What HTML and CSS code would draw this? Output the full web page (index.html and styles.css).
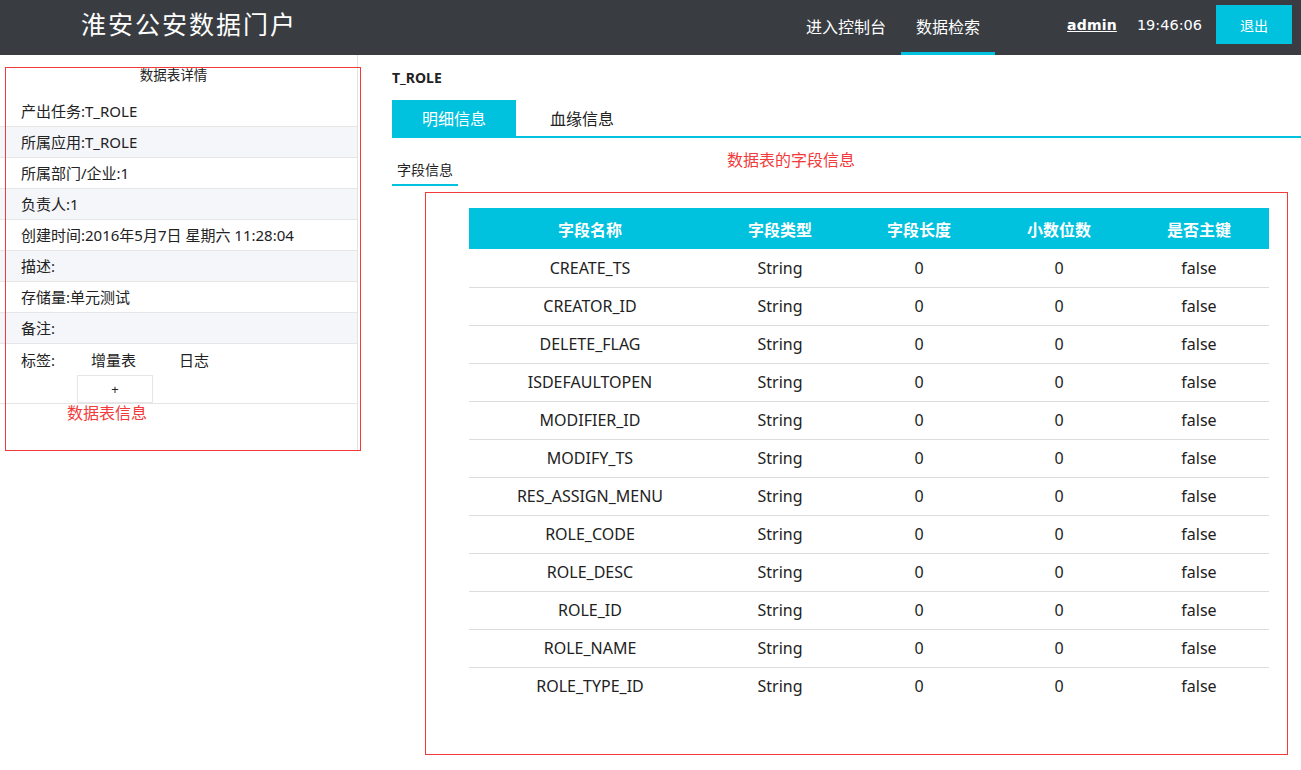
FILE: index.html
```html
<!DOCTYPE html>
<html lang="zh-CN">
<head>
<meta charset="utf-8">
<title>淮安公安数据门户</title>
<link rel="stylesheet" href="styles.css">
</head>
<body>
<header class="topbar">
  <div class="brand">淮安公安数据门户</div>
  <nav class="nav">
    <a class="nav-item">进入控制台</a>
    <a class="nav-item active">数据检索</a>
  </nav>
  <div class="user">
    <a class="username">admin</a>
    <span class="clock">19:46:06</span>
    <button class="logout">退出</button>
  </div>
</header>
<div class="page">
  <aside class="sidebar">
    <div class="side-title">数据表详情</div>
    <div class="row">产出任务:T_ROLE</div>
    <div class="row alt">所属应用:T_ROLE</div>
    <div class="row">所属部门/企业:1</div>
    <div class="row alt">负责人:1</div>
    <div class="row">创建时间:2016年5月7日 星期六 11:28:04</div>
    <div class="row alt">描述:</div>
    <div class="row">存储量:单元测试</div>
    <div class="row alt">备注:</div>
    <div class="row tags">
      <div class="tag-line">
        <span class="tag-label">标签:</span>
        <span class="tag">增量表</span>
        <span class="tag">日志</span>
      </div>
      <div class="add-btn">+</div>
    </div>
    <div class="note note-left">数据表信息</div>
    <div class="anno anno-left"></div>
  </aside>
  <main class="main">
    <div class="table-name">T_ROLE</div>
    <div class="tabs">
      <div class="tab active">明细信息</div>
      <div class="tab">血缘信息</div>
    </div>
    <div class="subtabs">
      <div class="subtab">字段信息</div>
      <div class="note note-right">数据表的字段信息</div>
    </div>
    <div class="field-box">
      <table class="fields">
        <thead>
          <tr><th class="c1">字段名称</th><th class="c2">字段类型</th><th class="c3">字段长度</th><th class="c3">小数位数</th><th class="c3">是否主键</th></tr>
        </thead>
        <tbody>
          <tr><td>CREATE_TS</td><td>String</td><td>0</td><td>0</td><td>false</td></tr>
          <tr><td>CREATOR_ID</td><td>String</td><td>0</td><td>0</td><td>false</td></tr>
          <tr><td>DELETE_FLAG</td><td>String</td><td>0</td><td>0</td><td>false</td></tr>
          <tr><td>ISDEFAULTOPEN</td><td>String</td><td>0</td><td>0</td><td>false</td></tr>
          <tr><td>MODIFIER_ID</td><td>String</td><td>0</td><td>0</td><td>false</td></tr>
          <tr><td>MODIFY_TS</td><td>String</td><td>0</td><td>0</td><td>false</td></tr>
          <tr><td>RES_ASSIGN_MENU</td><td>String</td><td>0</td><td>0</td><td>false</td></tr>
          <tr><td>ROLE_CODE</td><td>String</td><td>0</td><td>0</td><td>false</td></tr>
          <tr><td>ROLE_DESC</td><td>String</td><td>0</td><td>0</td><td>false</td></tr>
          <tr><td>ROLE_ID</td><td>String</td><td>0</td><td>0</td><td>false</td></tr>
          <tr><td>ROLE_NAME</td><td>String</td><td>0</td><td>0</td><td>false</td></tr>
          <tr><td>ROLE_TYPE_ID</td><td>String</td><td>0</td><td>0</td><td>false</td></tr>
        </tbody>
      </table>
    </div>
  </main>
</div>
</body>
</html>
```

FILE: styles.css
```css
* { box-sizing: border-box; }
html, body { margin: 0; padding: 0; }
body {
  font-family: "Noto Sans", "Noto Sans CJK SC", sans-serif;
  color: #222;
  background: #fff;
  width: 1301px;
  height: 770px;
  overflow: hidden;
}
.topbar {
  height: 55px;
  background: #393d42;
  display: flex;
  align-items: center;
  padding-left: 81px;
  padding-right: 9px;
  color: #fff;
}
.brand {
  font-size: 25px;
  letter-spacing: 2px;
  font-family: "Noto Sans CJK SC", sans-serif;
  line-height: 55px;
  margin-top: -8px;
}
.nav {
  display: flex;
  margin-left: auto;
  height: 55px;
}
.nav-item {
  font-size: 16px;
  font-family: "Noto Sans CJK SC", sans-serif;
  padding: 0 15px;
  line-height: 52px;
  border-bottom: 3px solid transparent;
  color: #fff;
}
.nav-item.active { border-bottom-color: #00c1de; }
.user {
  display: flex;
  align-items: center;
  margin-left: 72px;
  margin-top: -6px;
}
.username {
  font-weight: bold;
  font-size: 14px;
  text-decoration: underline;
  color: #fff;
  font-family: "DejaVu Sans", sans-serif;
  letter-spacing: 0.2px;
}
.clock {
  font-size: 14.5px;
  margin-left: 20px;
  font-family: "DejaVu Sans", sans-serif;
}
.logout {
  margin-left: 14px;
  width: 76px;
  height: 39px;
  border: 0;
  background: #00c1de;
  color: #fff;
  font-size: 14px;
  font-family: "Noto Sans CJK SC", sans-serif;
}
.page {
  display: flex;
  align-items: flex-start;
  height: 715px;
}
.sidebar {
  width: 358px;
  height: 396px;
  border-right: 1px solid #e3e3e3;
  position: relative;
  font-size: 15px;
  flex: none;
}
.side-title {
  text-align: center;
  height: 41px;
  line-height: 20px;
  padding-top: 10px;
  padding-right: 10px;
  font-size: 13.5px;
}
.row {
  height: 31px;
  line-height: 30px;
  padding-left: 21px;
  border-bottom: 1px solid #e6e6e6;
  font-size: 15px;
}
.row.alt { background: #f5f6fa; }
.row.tags {
  height: 60px;
  line-height: normal;
  padding-top: 5px;
}
.tag-line { display: flex; }
.tag-label { width: 70px; }
.tag { width: 88px; }
.add-btn {
  margin-left: 56px;
  margin-top: 5px;
  width: 76px;
  height: 28px;
  border: 1px solid #e6e6e6;
  text-align: center;
  line-height: 26px;
  font-size: 13px;
}
.note {
  color: #f23a3a;
  font-size: 16px;
  font-family: "Noto Sans CJK SC", sans-serif;
}
.note-left {
  padding-left: 67px;
  margin-top: -4px;
}
.anno {
  position: absolute;
  border: 1px solid #f23a3a;
  pointer-events: none;
}
.anno-left {
  left: 5px;
  top: 12px;
  width: 356px;
  height: 384px;
}
.main {
  flex: 1;
  padding-left: 34px;
}
.table-name {
  font-weight: bold;
  font-size: 14px;
  margin-top: 13px;
  height: 32px;
  line-height: 20px;
}
.tabs {
  display: flex;
  height: 38px;
  border-bottom: 2px solid #00c1de;
}
.tab {
  width: 124px;
  text-align: center;
  line-height: 36px;
  font-size: 16px;
  font-family: "Noto Sans CJK SC", sans-serif;
  padding-left: 8px;
}
.tab.active {
  background: #00c1de;
  color: #fff;
  padding-left: 0;
}
.subtabs {
  display: flex;
  height: 54px;
  padding-top: 21px;
  position: relative;
}
.subtab {
  width: 66px;
  height: 27px;
  text-align: center;
  font-size: 14px;
  line-height: 20px;
  border-bottom: 2px solid #00c1de;
  font-family: "Noto Sans CJK SC", sans-serif;
}
.note-right {
  position: absolute;
  left: 335px;
  top: 9px;
}
.field-box {
  margin-left: 33px;
  margin-right: 13px;
  height: 563px;
  border: 1px solid #f23a3a;
  padding: 15px 0 0 43px;
}
.fields {
  border-collapse: collapse;
  width: 800px;
  table-layout: fixed;
}
.fields th {
  background: #00c1de;
  color: #fff;
  height: 41px;
  font-size: 16px;
  font-weight: bold;
  font-family: "Noto Sans CJK SC", sans-serif;
  padding: 0;
}
.fields .c1 { width: 242px; }
.fields .c2 { width: 138px; }
.fields .c3 { width: 140px; }
.fields td {
  height: 38px;
  text-align: center;
  font-size: 16px;
  padding: 0;
  border-bottom: 1px solid #dddddd;
}
.fields tbody tr:last-child td { border-bottom: 0; }
```
